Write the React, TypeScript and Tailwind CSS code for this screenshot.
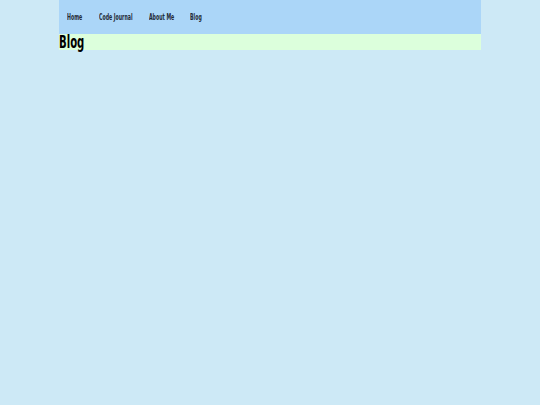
import React from 'react';

// condensed heavy look; widths set to match the narrow display face
const links = [
  { label: 'Home', w: 'w-[32px]' },
  { label: 'Code Journal', w: 'w-[50px]' },
  { label: 'About Me', w: 'w-[41px]' },
  { label: 'Blog', w: 'w-[30px]' },
];

export default function App() {
  return (
    <div className="min-h-[405px] w-full bg-[#cde9f6]" style={{ fontFamily: '"DejaVu Sans Condensed", "DejaVu Sans", sans-serif' }}>
      <div className="mx-auto w-[422px]">
        <nav className="flex h-[34px] items-center bg-[#abd6f8] pl-[8px] pt-px">
          <ul className="flex">
            {links.map(l => (
              <li key={l.label} className={`${l.w} whitespace-nowrap text-[8px] font-bold leading-none text-[#1f2a36]`}>
                <span className="inline-block origin-left scale-x-[0.65]">{l.label}</span>
              </li>
            ))}
          </ul>
        </nav>
        <h1 className="flex h-[16px] items-center bg-[#dcffdc] text-[17px] font-bold leading-none text-black">
          <span className="inline-block origin-left scale-x-[0.66]">Blog</span>
        </h1>
      </div>
    </div>
  );
}
